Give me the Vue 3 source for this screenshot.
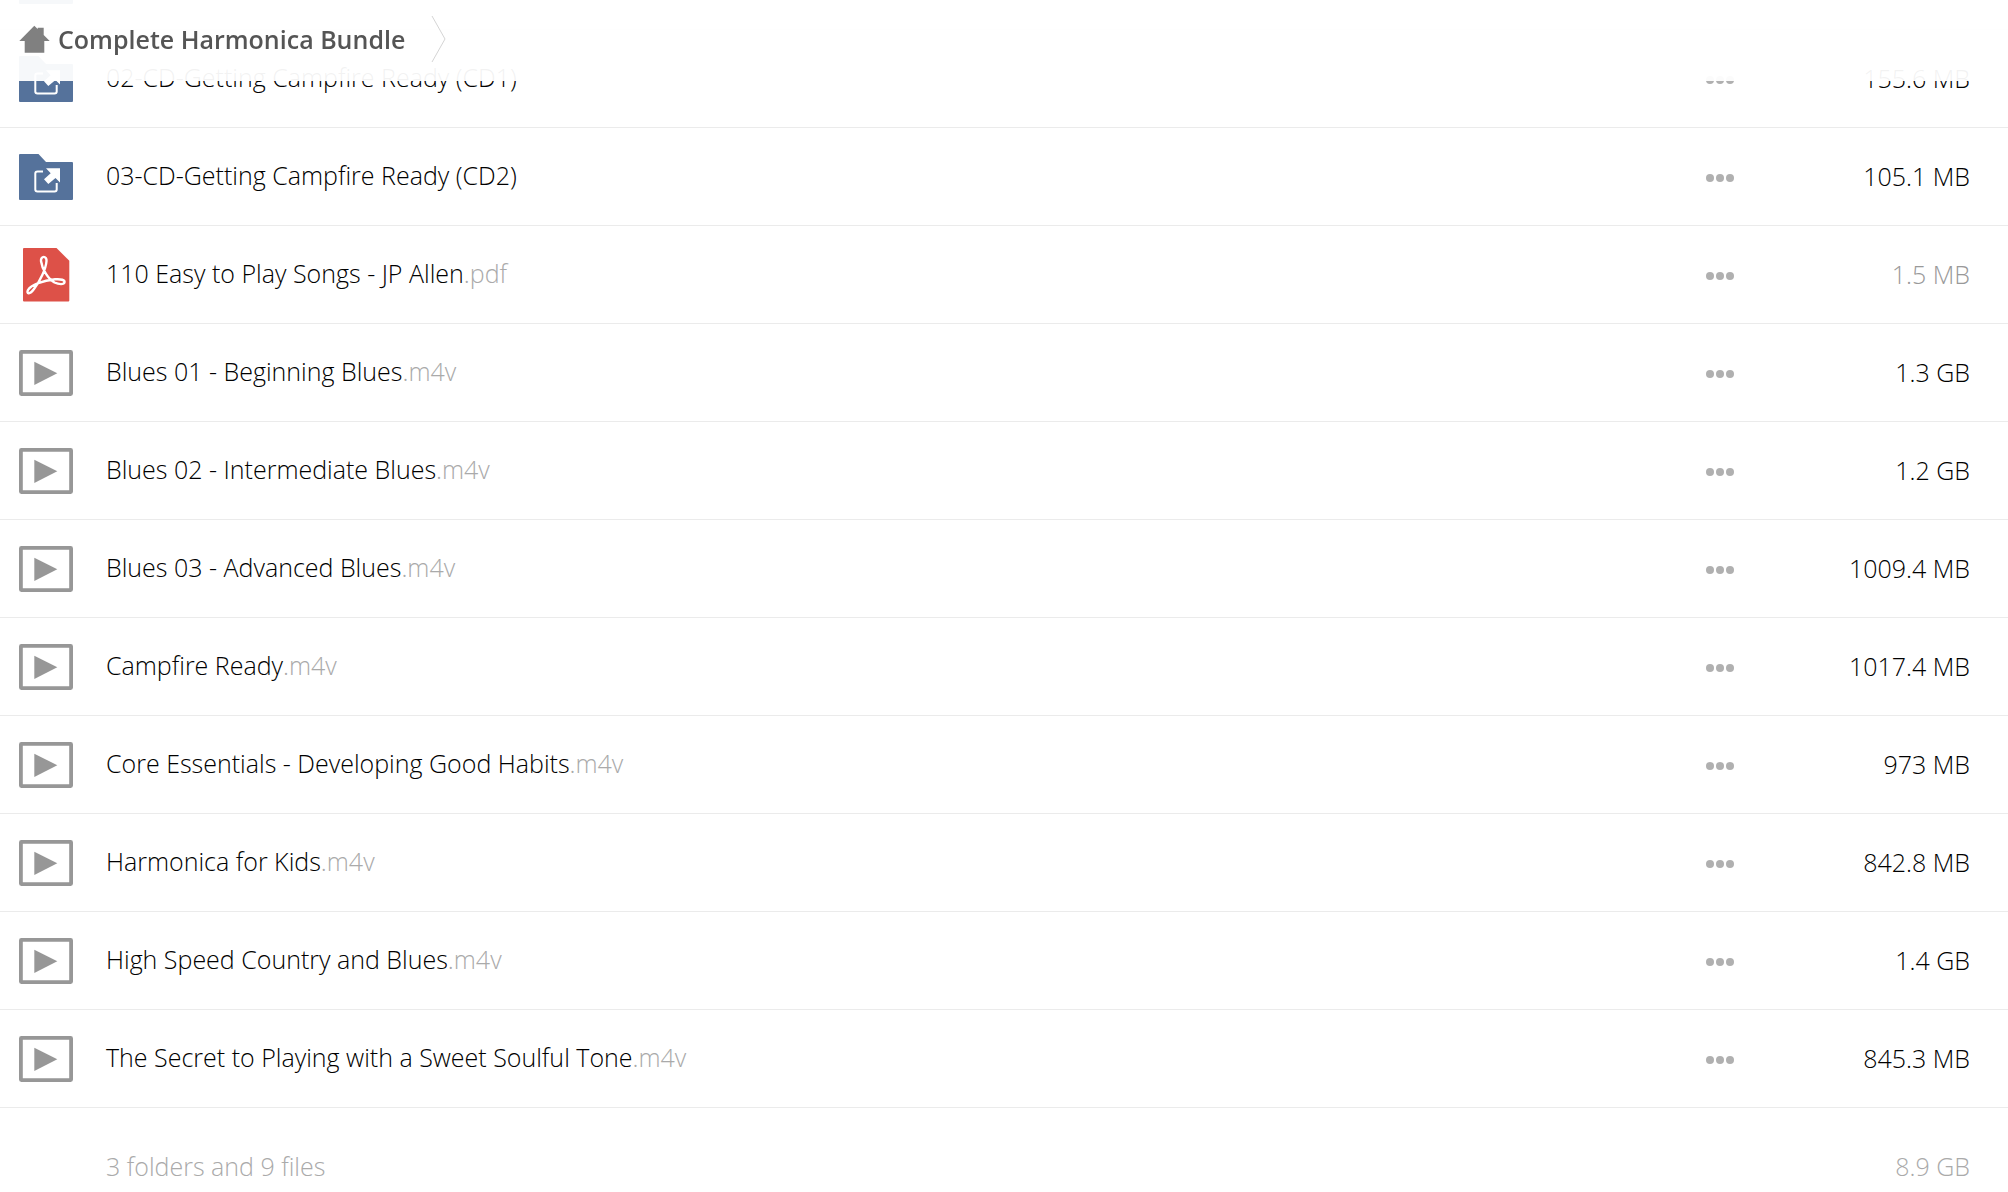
<template>
    <div class="browser">
        <header class="breadcrumbs">
            <a class="crumb" href="#">
                <svg class="home" viewBox="0 0 31 28" aria-hidden="true">
                    <path
                        d="M15.3 .7 18.7 4.1V2.7H24.7V10L30.7 16H25.3V27.7H5.7V16H.3Z"
                        fill="#808080"
                    />
                </svg>
                <span>Complete Harmonica Bundle</span>
            </a>
            <svg class="separator" viewBox="0 0 15 48" aria-hidden="true">
                <path d="M1 1 14 24 1 47" fill="none" stroke="#d4d4d4" />
            </svg>
        </header>

        <table class="files">
            <colgroup>
                <col class="col-icon" />
                <col />
                <col class="col-menu" />
                <col class="col-size" />
            </colgroup>
            <tbody>
                <tr v-for="(file, index) in files" :key="index">
                    <td class="cell-icon">
                        <svg class="icon" viewBox="0 0 54 54" aria-hidden="true">
                            <g v-if="file.type === 'folder'">
                                <path
                                    d="M1 4H19.5L27 12H53Q54 12 54 13V49Q54 50 53 50H1Q0 50 0 49V5Q0 4 1 4Z"
                                    fill="#55729b"
                                />
                                <path
                                    d="M24 21.5H18.5Q16.3 21.5 16.3 23.5V39.5Q16.3 41.5 18.5 41.5H35.5Q37.7 41.5 37.7 39.5V33"
                                    fill="none"
                                    stroke="#fff"
                                    stroke-width="2"
                                />
                                <path
                                    d="M27 18.3H41V32.5L36.5 28 29.3 34 25 29.2 31.7 23.2Z"
                                    fill="#fff"
                                />
                            </g>
                            <g v-else-if="file.type === 'pdf'">
                                <path
                                    d="M5 0H37.5L50.3 12.8V52.5Q50.3 53.5 49.3 53.5H5Q4 53.5 4 52.5V1Q4 0 5 0Z"
                                    fill="#dd5148"
                                />
                                <path
                                    d="M22 13C21.5 7.5 28 7.5 27.5 13C27 21 21 33 15 41C11 46.5 7 46.5 9 42C12 37 24 32.5 36 31.3C42 30.8 46 32 45.5 34.3C45 36.8 40 36.5 35.5 34.5C29 31 23 21 22 13Z"
                                    fill="none"
                                    stroke="#fff"
                                    stroke-width="2.4"
                                />
                            </g>
                            <g v-else>
                                <rect
                                    x="1.9"
                                    y="5.9"
                                    width="50.2"
                                    height="42.2"
                                    rx="0.5"
                                    fill="none"
                                    stroke="#979797"
                                    stroke-width="3.8"
                                />
                                <path d="M15.3 15.7 38.3 27.2 15.3 39Z" fill="#979797" />
                            </g>
                        </svg>
                    </td>
                    <td class="cell-name">
                        <a v-if="file.name" class="name" href="#"
                            >{{ file.name }}<span class="ext">{{ file.ext }}</span></a
                        >
                    </td>
                    <td>
                        <button class="menu" type="button" aria-label="More">
                            <i class="dot"></i>
                            <i class="dot"></i>
                            <i class="dot"></i>
                        </button>
                    </td>
                    <td class="size" :class="{ small: file.small }">{{ file.size }}</td>
                </tr>
            </tbody>
            <tfoot>
                <tr>
                    <td></td>
                    <td>3 folders and 9 files</td>
                    <td></td>
                    <td class="size">8.9 GB</td>
                </tr>
            </tfoot>
        </table>
    </div>
</template>

<script setup>
    const files = [
        { type: 'folder' },
        { type: 'folder', name: '02-CD-Getting Campfire Ready (CD1)', size: '155.6 MB' },
        { type: 'folder', name: '03-CD-Getting Campfire Ready (CD2)', size: '105.1 MB' },
        {
            type: 'pdf',
            name: '110 Easy to Play Songs - JP Allen',
            ext: '.pdf',
            size: '1.5 MB',
            small: true,
        },
        { type: 'video', name: 'Blues 01 - Beginning Blues', ext: '.m4v', size: '1.3 GB' },
        { type: 'video', name: 'Blues 02 - Intermediate Blues', ext: '.m4v', size: '1.2 GB' },
        { type: 'video', name: 'Blues 03 - Advanced Blues', ext: '.m4v', size: '1009.4 MB' },
        { type: 'video', name: 'Campfire Ready', ext: '.m4v', size: '1017.4 MB' },
        {
            type: 'video',
            name: 'Core Essentials - Developing Good Habits',
            ext: '.m4v',
            size: '973 MB',
        },
        { type: 'video', name: 'Harmonica for Kids', ext: '.m4v', size: '842.8 MB' },
        { type: 'video', name: 'High Speed Country and Blues', ext: '.m4v', size: '1.4 GB' },
        {
            type: 'video',
            name: 'The Secret to Playing with a Sweet Soulful Tone',
            ext: '.m4v',
            size: '845.3 MB',
        },
    ]
</script>

<style>
    body {
        background: #fff;
    }
</style>

<style scoped>
    /* the list is kept scrolled to its end, under the header */
    .browser {
        display: flex;
        flex-direction: column;
        justify-content: flex-end;
        height: 100vh;
        overflow: hidden;
        font-family: 'Open Sans', sans-serif;
        font-size: 25px;
        font-weight: 300;
        line-height: 34px;
        color: #000;
    }
    .breadcrumbs {
        position: fixed;
        top: 0;
        left: 0;
        right: 0;
        z-index: 1;
        display: flex;
        align-items: center;
        gap: 26px;
        box-sizing: border-box;
        height: 81px;
        padding: 0 19px 3px;
        background: rgba(255, 255, 255, 0.95);
    }
    .crumb {
        display: flex;
        align-items: center;
        gap: 8px;
        font-weight: 600;
        color: #555;
        text-decoration: none;
    }
    .home {
        width: 31px;
        height: 28px;
    }
    .separator {
        width: 15px;
        height: 48px;
    }
    .files {
        flex: none;
        width: 100%;
        table-layout: fixed;
        border-collapse: separate;
        border-spacing: 0;
    }
    .col-icon {
        width: 106px;
    }
    .col-menu {
        width: 100px;
    }
    .col-size {
        width: 202px;
    }
    td {
        box-sizing: border-box;
        height: 98px;
        padding: 0;
        border-bottom: 1px solid #ebebeb;
        vertical-align: middle;
    }
    .cell-icon {
        padding-left: 19px;
    }
    .icon {
        display: block;
        width: 54px;
        height: 54px;
    }
    .cell-name {
        padding-bottom: 4px;
    }
    .name {
        color: inherit;
        text-decoration: none;
    }
    .ext {
        color: #aaa;
    }
    .menu {
        display: flex;
        gap: 2px;
        padding: 2px 0 0;
        border: 0;
        background: none;
    }
    .dot {
        width: 8px;
        height: 8px;
        border-radius: 50%;
        background: #b0b0b0;
    }
    .size {
        padding-right: 38px;
        padding-bottom: 2px;
        text-align: right;
    }
    .small {
        color: #999;
    }
    tfoot td {
        height: 84px;
        padding-top: 34px;
        padding-bottom: 2px;
        border-bottom: 0;
        color: #aaa;
    }
</style>
